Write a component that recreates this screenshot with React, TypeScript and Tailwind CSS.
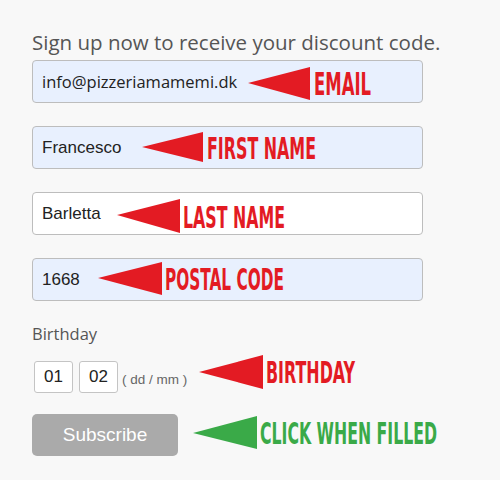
const fieldBase =
  "h-[43px] w-full rounded-[4px] border border-[#bdbdbd] px-[9px] text-[17px] text-[#222] outline-none font-['Liberation_Sans',Arial,sans-serif]";

interface Note {
  tip: [number, number];
  baseX: number;
  top: number;
  bottom: number;
  label: string;
  textX: number;
  textW: number;
  baseline: number;
  size: number;
  color: string;
}

// label glyphs are drawn at a smaller size and stretched upward, so they read
// as the tall condensed poster lettering of the screenshot
const STRETCH = 1.45;

const notes: Note[] = [
  { tip: [248, 83], baseX: 310, top: 67, bottom: 100, label: "EMAIL", textX: 314, textW: 57, baseline: 95, size: 32, color: "#e31b23" },
  { tip: [142, 147], baseX: 203, top: 132, bottom: 162, label: "FIRST NAME", textX: 207, textW: 109, baseline: 159, size: 30, color: "#e31b23" },
  { tip: [117, 215], baseX: 180, top: 199, bottom: 233, label: "LAST NAME", textX: 183, textW: 102, baseline: 228, size: 31, color: "#e31b23" },
  { tip: [98, 278], baseX: 162, top: 262, bottom: 295, label: "POSTAL CODE", textX: 165, textW: 119, baseline: 290, size: 31, color: "#e31b23" },
  { tip: [199, 372], baseX: 263, top: 355, bottom: 389, label: "BIRTHDAY", textX: 266, textW: 89, baseline: 383, size: 30, color: "#e31b23" },
  { tip: [193, 433], baseX: 257, top: 416, bottom: 449, label: "CLICK WHEN FILLED", textX: 260, textW: 177, baseline: 444, size: 30, color: "#3aaa48" },
];

function Annotations() {
  return (
    <svg className="absolute left-0 top-0" width={500} height={480}>
      {notes.map((n) => (
        <g key={n.label}>
          <polygon
            points={`${n.tip[0]},${n.tip[1]} ${n.baseX},${n.top} ${n.baseX},${n.bottom}`}
            fill={n.color}
          />
          <g transform={`translate(${n.textX} ${n.baseline}) scale(1 ${STRETCH})`}>
            <text
              x={0}
              y={0}
              fontSize={n.size / STRETCH}
              fontWeight={700}
              fontFamily="'DejaVu Sans Condensed','DejaVu Sans',sans-serif"
              fill={n.color}
              textLength={n.textW}
              lengthAdjust="spacingAndGlyphs"
            >
              {n.label}
            </text>
          </g>
        </g>
      ))}
    </svg>
  );
}

export default function App() {
  return (
    <div className="relative h-[480px] w-[500px] overflow-hidden bg-[#f8f8f8]">
      <div className="w-[423px] pl-[32px] pt-[30px]">
        <p className="whitespace-nowrap text-[20.5px] leading-[25px] text-[#555] font-['Open_Sans',sans-serif]">
          Sign up now to receive your discount code.
        </p>
        <div className="mt-[5px] flex flex-col gap-[23px]">
          <input
            readOnly
            value="info@pizzeriamamemi.dk"
            className={`${fieldBase} bg-[#e8f0fe] !text-[16.5px] font-['Open_Sans',sans-serif]`}
          />
          <input readOnly value="Francesco" className={`${fieldBase} bg-[#e8f0fe]`} />
          <input readOnly value="Barletta" className={`${fieldBase} bg-white`} />
          <input readOnly value="1668" className={`${fieldBase} bg-[#e8f0fe]`} />
        </div>
        <p className="mt-[22px] text-[16.5px] leading-[22px] text-[#555] font-['Open_Sans',sans-serif]">
          Birthday
        </p>
        <div className="mt-[16px] flex items-center pl-[2px]">
          <input
            readOnly
            value="01"
            className="h-[32px] w-[39px] rounded-[3px] border border-[#c4c4c4] bg-white text-center text-[17px] text-[#222] outline-none font-['Liberation_Sans',Arial,sans-serif]"
          />
          <input
            readOnly
            value="02"
            className="ml-[6px] h-[32px] w-[39px] rounded-[3px] border border-[#c4c4c4] bg-white text-center text-[17px] text-[#222] outline-none font-['Liberation_Sans',Arial,sans-serif]"
          />
          <span className="ml-[4px] mt-[6px] text-[13.5px] text-[#666] font-['Liberation_Sans',Arial,sans-serif]">
            ( dd / mm )
          </span>
        </div>
        <button className="mt-[21px] h-[42px] w-[146px] rounded-[5px] bg-[#aaaaaa] text-[19px] text-white font-['Liberation_Sans',Arial,sans-serif]">
          Subscribe
        </button>
      </div>
      <Annotations />
    </div>
  );
}
